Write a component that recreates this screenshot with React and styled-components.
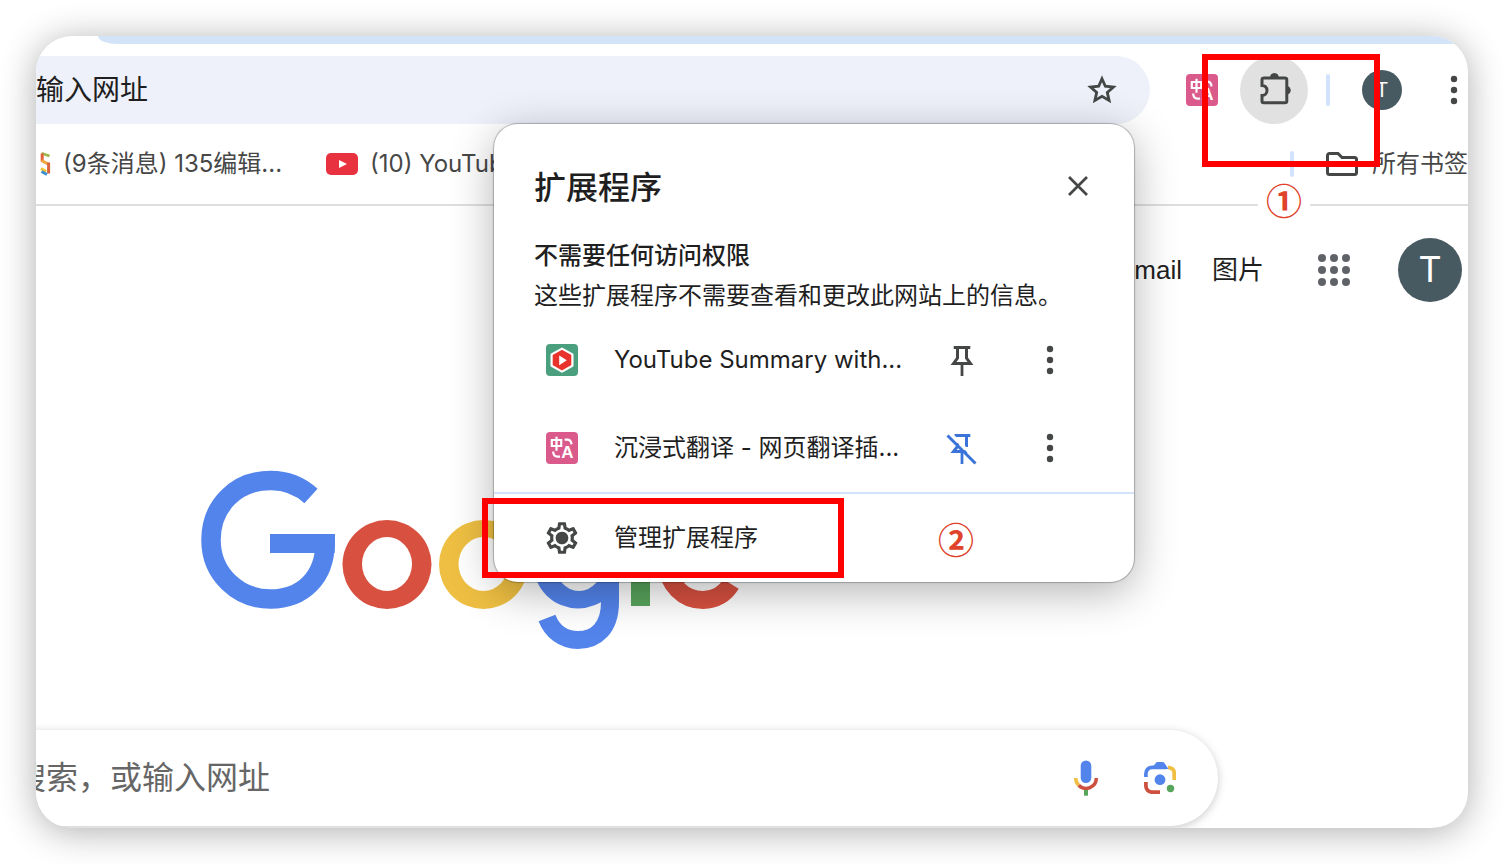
// src/App.jsx
import { useState } from "react";
import styled, { createGlobalStyle } from "styled-components";
import { MdOutlineSettings } from "react-icons/md";

const extensions = [
  { id: "summary", name: "YouTube Summary with...", Icon: SummaryIcon, pinned: false },
  { id: "translate", name: "沉浸式翻译 - 网页翻译插...", Icon: TranslateIcon, pinned: true },
];

export default function App() {
  const [pinned, setPinned] = useState(
    Object.fromEntries(extensions.map((ext) => [ext.id, ext.pinned]))
  );

  const togglePin = (id) => {
    setPinned((prev) => ({ ...prev, [id]: !prev[id] }));
  };

  return (
    <>
      <GlobalStyle />
      <BrowserWindow>
        <TabStrip />

        {/* 地址栏 */}
        <Toolbar>
          <Omnibox>
            <AddressInput aria-label="地址栏" defaultValue="输入网址" />
            <IconButton aria-label="为此标签页添加书签">
              <StarIcon />
            </IconButton>
          </Omnibox>
          <ToolbarActions>
            <IconButton aria-label="沉浸式翻译">
              <TranslateIcon />
            </IconButton>
            <PuzzleButton aria-label="扩展程序">
              <PuzzleIcon />
            </PuzzleButton>
            <Divider $height={32} $before={18} />
            <Avatar $size={40} $font={20} $before={32} aria-label="个人资料">T</Avatar>
            <MenuButton aria-label="菜单">
              <KebabIcon />
            </MenuButton>
          </ToolbarActions>
        </Toolbar>

        {/* 书签栏 */}
        <BookmarkBar>
          <Bookmark href="#135" $gap={12}>
            <RibbonIcon />
            (9条消息) 135编辑...
          </Bookmark>
          <Bookmark href="#youtube" $gap={12}>
            <YoutubeIcon />
            (10) YouTube
          </Bookmark>
          <AllBookmarks>
            <Divider $height={26} $before={0} />
            <Bookmark as="button" $gap={14}>
              <FolderIcon />
              所有书签
            </Bookmark>
          </AllBookmarks>
        </BookmarkBar>

        {/* 新标签页 */}
        <Page>
          <PageHeader>
            <HeaderLink href="#gmail">Gmail</HeaderLink>
            <HeaderLink href="#images">图片</HeaderLink>
            <AppsButton aria-label="Google 应用">
              <AppsIcon />
            </AppsButton>
            <Avatar $size={64} $font={36} $before={48} aria-label="Google 账号">T</Avatar>
          </PageHeader>
          <GoogleLogo />
          <SearchBox onSubmit={(e) => e.preventDefault()}>
            <SearchInput aria-label="搜索" placeholder="搜索，或输入网址" />
            <IconButton type="button" aria-label="语音搜索">
              <MicIcon />
            </IconButton>
            <IconButton type="button" aria-label="按图搜索">
              <LensIcon />
            </IconButton>
          </SearchBox>
        </Page>

        {/* 扩展程序弹窗 */}
        <Popup>
          <PopupHeader>
            <PopupTitle>扩展程序</PopupTitle>
            <CloseButton aria-label="关闭">
              <CloseIcon />
            </CloseButton>
          </PopupHeader>
          <SectionTitle>不需要任何访问权限</SectionTitle>
          <SectionText>这些扩展程序不需要查看和更改此网站上的信息。</SectionText>
          {extensions.map(({ id, name, Icon }) => (
            <ExtensionRow key={id}>
              <Icon />
              <ExtensionName>{name}</ExtensionName>
              <RowButton
                $active={pinned[id]}
                aria-label={pinned[id] ? "取消固定" : "固定"}
                onClick={() => togglePin(id)}
              >
                {pinned[id] ? <UnpinIcon /> : <PinIcon />}
              </RowButton>
              <RowButton aria-label="更多操作">
                <KebabIcon />
              </RowButton>
            </ExtensionRow>
          ))}
          <ManageRow>
            <GearIcon />
            管理扩展程序
          </ManageRow>
          <ManageMark />
          <ManageStep>②</ManageStep>
        </Popup>

        <PuzzleMark />
        <PuzzleStep>①</PuzzleStep>
      </BrowserWindow>
    </>
  );
}

/* ---------------- icons ---------------- */
function StarIcon() {
  return (
    <svg width="36" height="36" viewBox="0 0 36 36" aria-hidden="true">
      <path
        d="M18 6.700l3.300 7.500 8.100.8-6.100 5.400 1.800 8-7.100-4.100-7.100 4.100 1.800-8L6.600 15l8.100-.8z"
        fill="none"
        stroke="#444746"
        strokeWidth="2.800"
      />
    </svg>
  );
}

function TranslateIcon() {
  return (
    <svg width="32" height="32" viewBox="0 0 32 32" aria-hidden="true">
      <rect width="32" height="32" rx="4" fill="#d95a8b" />
      <g fill="none" stroke="#fff" strokeWidth="2.200">
        <path d="M5.800 8h9.400v6H5.800zM10.500 4.800v14" />
        <path d="M18.600 7.600h2.600q4 0 4.300 4.800M7.200 19.600q0 5 4.200 5H14" />
      </g>
      <text x="21.500" y="26" textAnchor="middle" fontFamily="Liberation Sans, sans-serif" fontWeight="700" fontSize="17" fill="#fff">A</text>
    </svg>
  );
}

function SummaryIcon() {
  return (
    <svg width="32" height="32" viewBox="0 0 32 32" aria-hidden="true">
      <rect width="32" height="32" rx="4" fill="#4a9f7f" />
      <path d="M16 4.600l10.400 5.800v11.400L16 27.600 5.600 21.800V10.400z" fill="#e8322b" stroke="#fff" strokeWidth="2.200" strokeLinejoin="round" />
      <path d="M13.200 11.400l7.600 4.800-7.600 5z" fill="#fff" />
    </svg>
  );
}

function PuzzleIcon() {
  return (
    <svg width="36" height="36" viewBox="-4 0 36 36" aria-hidden="true">
      <path
        d="M3.500 5.900H25a1.800 1.800 0 0 1 1.800 1.800V29a1.800 1.800 0 0 1-1.800 1.800H3.800A1.800 1.800 0 0 1 2 29v-5.600c2.600 0 5-1.800 5-5s-2.400-5-5-5V7.700a1.800 1.800 0 0 1 1.800-1.800z"
        fill="none"
        stroke="#444746"
        strokeWidth="3"
      />
      <path d="M10.400 5.500a4 4 0 0 1 8 0zM27 14.200a4.200 4.200 0 0 1 0 8.200z" fill="#444746" stroke="#444746" />
    </svg>
  );
}

function KebabIcon() {
  return (
    <svg width="24" height="32" viewBox="0 0 24 32" fill="#444746" aria-hidden="true">
      <circle cx="12" cy="5" r="3.200" />
      <circle cx="12" cy="16" r="3.200" />
      <circle cx="12" cy="27" r="3.200" />
    </svg>
  );
}

function RibbonIcon() {
  return (
    <svg width="11" height="26" viewBox="0 0 11 26" fill="none" strokeWidth="3" aria-hidden="true">
      <path d="M1.500 2.200L9.500 5" stroke="#9bb84a" strokeWidth="2.500" />
      <path d="M2.200 2.500v8" stroke="#e2603a" />
      <path d="M1.500 9.500l7 3.800" stroke="#f0a43a" />
      <path d="M8.600 11.500v11" stroke="#d9643c" />
      <path d="M1 17.500l5 3" stroke="#f2c230" />
      <path d="M1.500 20.500l5.500 3" stroke="#3a8fd0" />
    </svg>
  );
}

function YoutubeIcon() {
  return (
    <svg width="32" height="22" viewBox="0 0 32 22" aria-hidden="true">
      <rect width="32" height="22" rx="5" fill="#e8323f" />
      <path d="M13 7l8 4-8 4z" fill="#fff" />
    </svg>
  );
}

function FolderIcon() {
  return (
    <svg width="32" height="24" viewBox="0 0 32 24" aria-hidden="true">
      <path
        d="M3.500 1.500H12l4 4h12.500a2 2 0 0 1 2 2v13a2 2 0 0 1-2 2h-25a2 2 0 0 1-2-2v-17a2 2 0 0 1 2-2z"
        fill="none"
        stroke="#444746"
        strokeWidth="3"
      />
    </svg>
  );
}

function AppsIcon() {
  const steps = [4, 16, 28];
  return (
    <svg width="32" height="32" viewBox="0 0 32 32" fill="#5f6368" aria-hidden="true">
      {steps.map((y) => steps.map((x) => <circle key={`${x}-${y}`} cx={x} cy={y} r="4" />))}
    </svg>
  );
}

function CloseIcon() {
  return (
    <svg width="20" height="20" viewBox="0 0 20 20" aria-hidden="true">
      <path d="M1 1l18 18M19 1L1 19" stroke="#444746" strokeWidth="2.700" />
    </svg>
  );
}

function PinIcon() {
  return (
    <svg width="32" height="34" viewBox="0 0 32 34" fill="none" stroke="currentColor" strokeWidth="3" aria-hidden="true">
      <path d="M7.700 4.500h16.600M11.500 4.500V15l-4 5.600h17l-4-5.600V4.500" />
      <path d="M16 21v12" strokeWidth="2.800" />
    </svg>
  );
}

function UnpinIcon() {
  return (
    <svg width="32" height="34" viewBox="0 0 32 34" fill="none" stroke="currentColor" strokeWidth="3" aria-hidden="true">
      <path d="M8.500 4.500h15.800M20.500 4.500V16M11.500 12v3.500l-4 5.100h14" />
      <path d="M16 21v12" strokeWidth="2.800" />
      <path d="M4 2l26 26" stroke="#fff" strokeWidth="3" />
      <path d="M1.500 4.500l28 28" />
    </svg>
  );
}

function GearIcon() {
  return (
    <svg width="38" height="38" viewBox="0 0 24 24" color="#444746" aria-hidden="true">
      <MdOutlineSettings size={24} />
      <circle cx="12" cy="12" r="3.700" fill="currentColor" />
    </svg>
  );
}

function MicIcon() {
  return (
    <svg width="32" height="36" viewBox="0 0 32 36" fill="none" aria-hidden="true">
      <rect x="10.700" y="0.500" width="10.600" height="22.500" rx="5.300" fill="#5384ec" />
      <path d="M5.700 18a10.300 10.300 0 0 0 3 7.300" stroke="#eebf42" strokeWidth="3.500" />
      <path d="M8.700 25.300A10.300 10.300 0 0 0 26.300 18" stroke="#cc4f3f" strokeWidth="3.500" />
      <path d="M16 30v5.700" stroke="#58a55c" strokeWidth="4" />
    </svg>
  );
}

function LensIcon() {
  return (
    <svg width="32" height="32" viewBox="0 0 32 32" fill="none" strokeWidth="3.700" aria-hidden="true">
      <path d="M24 5.300q6.200.5 6.200 6.200v6.500" stroke="#eebf42" />
      <path d="M1.900 15v-3.500a6.200 6.200 0 0 1 6.200-6.200H22" stroke="#5384ec" />
      <path d="M9.500 4l2.500-3.200q.6-.8 1.600-.8h5q1 0 1.600.8L24.500 7.100H9.500z" fill="#5384ec" />
      <path d="M1.900 20v4a6.200 6.200 0 0 0 6.200 6.200H16" stroke="#cc4f3f" />
      <circle cx="16" cy="17.700" r="5.400" fill="#5384ec" />
      <circle cx="26.500" cy="26.500" r="3.700" fill="#58a55c" />
    </svg>
  );
}

function GoogleLogo() {
  return (
    <LogoSvg width="560" height="180" viewBox="200 470 560 180" fill="none" role="img" aria-label="Google">
      <path
        d="M311 496A59.500 59.500 0 0 0 270.500 480.500C236 480.500 211 506 211 540S238 599 270.500 599C303 599 325 577 325 543V534"
        stroke="#5384ec"
        strokeWidth="19.500"
      />
      <rect x="270" y="534" width="64.700" height="19" fill="#5384ec" />
      <path d="M325 534h9.700q1 12-2 23H325z" fill="#5384ec" />
      <circle cx="387" cy="564.500" r="44.500" fill="#d85140" />
      <ellipse cx="387" cy="564" rx="25" ry="27" fill="#fff" />
      <circle cx="483.500" cy="564.500" r="44.500" fill="#eebf42" />
      <ellipse cx="483.500" cy="564" rx="25" ry="27" fill="#fff" />
      <circle cx="578" cy="564" r="44.500" fill="#5384ec" />
      <ellipse cx="579" cy="564" rx="24" ry="27" fill="#fff" />
      <path d="M610 523v79C610 628 596 640 578 640C563 640 552 631 547 618" stroke="#5384ec" strokeWidth="18" />
      <rect x="631" y="475" width="19" height="131" fill="#58a55c" />
      <path d="M731 584C725 594 715 600 703 600A35.500 35.500 0 0 1 703 529C720 529 730 540 734 552L672 578" stroke="#d85140" strokeWidth="18" />
    </LogoSvg>
  );
}

/* ---------------- styled-components ---------------- */
const GlobalStyle = createGlobalStyle`
  * {
    box-sizing: border-box;
  }

  body {
    margin: 0;
    background: #fff;
    font-family: Inter, "Noto Sans CJK SC", sans-serif;
    color: #1f1f1f;
  }

  button,
  input {
    font: inherit;
    color: inherit;
    border: none;
    background: none;
    padding: 0;
  }

  button {
    cursor: pointer;
  }

  a {
    color: inherit;
    text-decoration: none;
  }

  svg {
    display: block;
    flex-shrink: 0;
  }
`;

const BrowserWindow = styled.div`
  position: relative;
  margin: 36px;
  min-height: calc(100vh - 72px);
  border-radius: 36px;
  background: #fff;
  overflow: hidden;
  box-shadow: 0 4px 36px rgba(0, 0, 0, 0.32);
`;

const TabStrip = styled.div`
  height: 8px;
  margin-left: 62px;
  border-bottom-left-radius: 20px 8px;
  background: #d3e3f8;
`;

const Toolbar = styled.div`
  display: flex;
  align-items: center;
  padding-top: 12px;
`;

const Omnibox = styled.div`
  display: flex;
  align-items: center;
  flex: 1;
  height: 68px;
  padding-right: 30px;
  border-radius: 0 34px 34px 0;
  background: #eef1fa;
  color: #444746;
`;

const AddressInput = styled.input`
  flex: 1;
  min-width: 0;
  font-size: 28px;
  line-height: 40px;
  color: #1f1f1f;
  outline: none;
`;

const ToolbarActions = styled.div`
  display: flex;
  align-items: center;
  padding: 0 2px 0 36px;
`;

const IconButton = styled.button`
  display: flex;
  align-items: center;
  justify-content: center;
`;

const PuzzleButton = styled(IconButton)`
  width: 68px;
  height: 68px;
  margin-left: 22px;
  border-radius: 50%;
  background: #e1e1e1;
`;

const MenuButton = styled(IconButton)`
  margin-left: 40px;
`;

const Divider = styled.span`
  width: 4px;
  height: ${({ $height }) => $height}px;
  margin-left: ${({ $before }) => $before}px;
  border-radius: 2px;
  background: #d3e3fd;
`;

const Avatar = styled.button`
  display: flex;
  align-items: center;
  justify-content: center;
  flex-shrink: 0;
  width: ${({ $size }) => $size}px;
  height: ${({ $size }) => $size}px;
  margin-left: ${({ $before }) => $before}px;
  border-radius: 50%;
  background: #485a61;
  color: #fff;
  font-family: Roboto, sans-serif;
  font-size: ${({ $font }) => $font}px;
`;

const BookmarkBar = styled.div`
  display: flex;
  align-items: center;
  gap: 44px;
  height: 82px;
  padding-left: 4px;
  border-bottom: 2px solid #dfdfdf;
`;

const Bookmark = styled.a`
  display: flex;
  align-items: center;
  gap: ${({ $gap }) => $gap}px;
  font-size: 24px;
  line-height: 32px;
  white-space: nowrap;
  color: #474747;
`;

const AllBookmarks = styled.div`
  display: flex;
  align-items: center;
  gap: 32px;
  margin-left: auto;
`;

const Page = styled.main`
  padding-bottom: 2px;
`;

const PageHeader = styled.header`
  display: flex;
  align-items: center;
  justify-content: flex-end;
  padding: 32px 6px 0 0;
`;

const HeaderLink = styled.a`
  margin-left: 30px;
  font-family: "Liberation Sans", "Noto Sans CJK SC", sans-serif;
  font-size: 26px;
  line-height: 32px;
`;

const AppsButton = styled(IconButton)`
  margin-left: 54px;
`;

const LogoSvg = styled.svg`
  margin: 168px 0 0 164px;
`;

const SearchBox = styled.form`
  display: flex;
  align-items: center;
  gap: 42px;
  height: 96px;
  margin: 80px 250px 0 -60px;
  padding: 0 42px 0 38px;
  border-radius: 48px;
  background: #fff;
  box-shadow: 0 2px 8px rgba(60, 64, 67, 0.28);
`;

const SearchInput = styled.input`
  flex: 1;
  min-width: 0;
  font-size: 32px;
  line-height: 48px;
  outline: none;

  &::placeholder {
    color: #666;
    opacity: 1;
  }
`;

const Popup = styled.section`
  position: absolute;
  top: 88px;
  right: 334px;
  width: 640px;
  border-radius: 24px;
  background: #fff;
  box-shadow: 0 0 1px 1px rgba(0, 0, 0, 0.25), 0 10px 44px rgba(0, 0, 0, 0.3);
`;

const PopupHeader = styled.div`
  display: flex;
  align-items: flex-start;
  justify-content: space-between;
  padding: 32px 36px 16px 40px;
`;

const PopupTitle = styled.h1`
  margin: 0;
  font-size: 32px;
  font-weight: 500;
  line-height: 64px;
`;

const CloseButton = styled(IconButton)`
  width: 40px;
  height: 60px;
`;

const SectionTitle = styled.h2`
  margin: 0;
  padding: 0 40px;
  font-size: 24px;
  font-weight: 500;
  line-height: 40px;
`;

const SectionText = styled.p`
  margin: 0;
  padding: 0 40px;
  font-size: 24px;
  line-height: 40px;
`;

const ExtensionRow = styled.div`
  display: flex;
  align-items: center;
  height: 88px;
  padding: 0 40px 0 52px;
`;

const ExtensionName = styled.span`
  flex: 1;
  margin-left: 36px;
  font-size: 24px;
  line-height: 32px;
  white-space: nowrap;
`;

const RowButton = styled(IconButton)`
  width: 88px;
  height: 56px;
  color: ${({ $active }) => ($active ? "#3b74d8" : "#444746")};
`;

const ManageRow = styled.button`
  display: flex;
  align-items: center;
  gap: 33px;
  width: 100%;
  height: 90px;
  padding-left: 49px;
  border-top: 2px solid #d3e3fd;
  font-size: 24px;
  line-height: 32px;
`;

/* 步骤标注 */
const Mark = styled.div`
  position: absolute;
  border: 6px solid #fe0000;
  pointer-events: none;
`;

const ManageMark = styled(Mark)`
  left: -12px;
  bottom: 4px;
  width: 362px;
  height: 80px;
`;

const PuzzleMark = styled(Mark)`
  top: 18px;
  right: 88px;
  width: 178px;
  height: 113px;
`;

const Step = styled.span`
  position: absolute;
  width: 52px;
  background: #fff;
  color: #e0432b;
  font-family: "Noto Sans CJK SC", sans-serif;
  font-size: 36px;
  font-weight: 700;
  line-height: 44px;
  text-align: center;
`;

const PuzzleStep = styled(Step)`
  top: 141px;
  right: 158px;
`;

const ManageStep = styled(Step)`
  right: 152px;
  bottom: 22px;
`;
